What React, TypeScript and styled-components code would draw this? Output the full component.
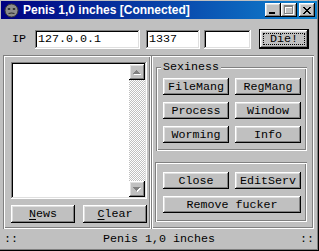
import React from 'react';
import styled, { createGlobalStyle } from 'styled-components';

const Global = createGlobalStyle`
  html, body { margin: 0; padding: 0; background: #c0c0c0; }
  body { width: 319px; height: 251px; overflow: hidden; }
  * { box-sizing: border-box; }
`;

const mono = `"Liberation Mono", "DejaVu Sans Mono", monospace`;

const raised = `box-shadow: inset -1px -1px #000, inset 1px 1px #fff, inset -2px -2px #808080, inset 2px 2px #dfdfdf;`;
const sunken = `box-shadow: inset -1px -1px #fff, inset 1px 1px #808080, inset -2px -2px #dfdfdf, inset 2px 2px #000;`;
const etched = `box-shadow: inset 1px 1px #808080, inset -1px -1px #fff, inset 2px 2px #fff, inset -2px -2px #808080;`;

const Window = styled.div`
  width: 319px;
  height: 251px;
  background: #c0c0c0;
  padding: 1px 2px 3px 1px;
  display: flex;
  flex-direction: column;
  box-shadow: inset -1px -1px #000, inset -2px -2px #808080;
  font-family: ${mono};
  font-size: 11.67px;
  color: #000;
`;

const TitleBar = styled.div`
  height: 18px;
  display: flex;
  align-items: center;
  padding-left: 3px;
  background: linear-gradient(90deg, #000080, #1084d0);
`;

const TitleText = styled.span`
  margin-left: 4px;
  font-family: Arial, "Liberation Sans", Helvetica, sans-serif;
  font-weight: 700;
  font-size: 12px;
  color: #fff;
  white-space: nowrap;
`;

const CaptionGroup = styled.div`
  margin-left: auto;
  margin-right: 2px;
  display: flex;
  align-items: center;
`;

const CaptionBtn = styled.div<{ $gap?: number }>`
  width: 16px;
  height: 14px;
  margin-left: ${p => p.$gap ?? 0}px;
  background: #c0c0c0;
  ${raised}
  display: flex;
  align-items: center;
  justify-content: center;
`;

const IPRow = styled.div`
  margin-top: 10px;
  height: 20px;
  display: flex;
  align-items: center;
  padding-left: 11px;
`;

const Label = styled.span`
  width: 14px;
  white-space: nowrap;
`;

const Field = styled.div<{ $w: number; $ml: number }>`
  width: ${p => p.$w}px;
  margin-left: ${p => p.$ml}px;
  height: 19px;
  background: #fff;
  ${sunken}
  padding: 0 3px;
  display: flex;
  align-items: center;
  white-space: nowrap;
`;

const DefaultBtn = styled.div`
  width: 50px;
  height: 20px;
  margin-left: 8px;
  background: #c0c0c0;
  box-shadow: inset 0 0 0 1px #000, inset -2px -2px #000, inset 2px 2px #fff, inset -3px -3px #808080, inset 3px 3px #dfdfdf;
  display: flex;
  align-items: center;
  justify-content: center;
`;

const Focus = styled.span`
  width: 42px;
  height: 12px;
  outline: 1px dotted #000;
  outline-offset: -1px;
  display: flex;
  align-items: center;
  justify-content: center;
`;

const Main = styled.div`
  margin-top: 6px;
  height: 174px;
  display: flex;
  padding-left: 2px;
`;

const LeftPanel = styled.div`
  width: 148px;
  ${etched}
  padding: 7px 0 0 8px;
  display: flex;
  flex-direction: column;
`;

const ListBox = styled.div`
  width: 136px;
  height: 137px;
  background: #fff;
  ${sunken}
  padding: 2px;
  display: flex;
  justify-content: flex-end;
`;

const ScrollBar = styled.div`
  width: 16px;
  display: flex;
  flex-direction: column;
  background: repeating-conic-gradient(#fff 0 25%, #c0c0c0 0 50%) 0 0 / 2px 2px;
`;

const ScrollBtn = styled.div`
  width: 16px;
  height: 16px;
  background: #c0c0c0;
  ${raised}
  display: flex;
  align-items: center;
  justify-content: center;
`;

const Track = styled.div`
  flex: 1;
`;

const ButtonRow = styled.div<{ $gap: number; $mt: number }>`
  display: flex;
  gap: ${p => p.$gap}px;
  margin-top: ${p => p.$mt}px;
`;

const Btn = styled.div<{ $w: number; $h?: number }>`
  width: ${p => p.$w}px;
  height: ${p => p.$h ?? 17}px;
  background: #c0c0c0;
  ${raised}
  display: flex;
  align-items: center;
  justify-content: center;
  white-space: pre;
`;

const U = styled.span`
  text-decoration: underline;
  text-underline-offset: 2px;
`;

const RightPanel = styled.div`
  width: 163px;
  ${etched}
  padding: 7px 0 0 4px;
  display: flex;
  flex-direction: column;
`;

const Group = styled.div`
  position: relative;
  margin-top: 5px;
  margin-left: 1px;
  width: 151px;
  height: 84px;
  ${etched}
  padding: 11px 0 0 7px;
  display: flex;
  flex-direction: column;
  gap: 7px;
`;

const Legend = styled.span`
  position: absolute;
  top: -6px;
  left: 5px;
  padding: 0 2px;
  background: #c0c0c0;
  line-height: 12px;
`;

const Frame = styled.div`
  margin-top: 11px;
  width: 152px;
  height: 60px;
  ${etched}
  padding: 10px 0 0 8px;
  display: flex;
  flex-direction: column;
  gap: 7px;
`;

const GridRow = styled.div`
  display: flex;
  gap: 6px;
`;

const StatusBar = styled.div`
  flex: 1;
  display: flex;
  align-items: center;
  padding: 1px 3px 0 3px;
  justify-content: space-between;
`;

const FaceIcon = () => (
  <svg width="15" height="15" viewBox="0 0 15 15">
    <circle cx="7.5" cy="7.5" r="6.5" fill="#8c8c8c" stroke="#3a3a3a" strokeWidth="1" />
    <ellipse cx="5" cy="6" rx="1.4" ry="1" fill="#2a2a2a" />
    <ellipse cx="10" cy="6" rx="1.4" ry="1" fill="#2a2a2a" />
    <path d="M4.5 10.5 Q7.5 9.5 10.5 10.5" stroke="#2a2a2a" strokeWidth="1.2" fill="none" />
  </svg>
);

const MinGlyph = () => (
  <svg width="8" height="7" viewBox="0 0 8 7" shapeRendering="crispEdges">
    <rect x="0" y="5" width="6" height="2" fill="#000" />
  </svg>
);

const MaxGlyph = () => (
  <svg width="10" height="10" viewBox="0 0 10 10" shapeRendering="crispEdges">
    <g fill="#fff" transform="translate(1,1)">
      <rect x="0" y="0" width="9" height="2" />
      <rect x="0" y="0" width="1" height="9" />
      <rect x="8" y="0" width="1" height="9" />
      <rect x="0" y="8" width="9" height="1" />
    </g>
    <g fill="#808080">
      <rect x="0" y="0" width="9" height="2" />
      <rect x="0" y="0" width="1" height="9" />
      <rect x="8" y="0" width="1" height="9" />
      <rect x="0" y="8" width="9" height="1" />
    </g>
  </svg>
);

const CloseGlyph = () => (
  <svg width="8" height="7" viewBox="0 0 8 7" shapeRendering="crispEdges" fill="#000">
    <rect x="0" y="0" width="2" height="1" /><rect x="6" y="0" width="2" height="1" />
    <rect x="1" y="1" width="2" height="1" /><rect x="5" y="1" width="2" height="1" />
    <rect x="2" y="2" width="4" height="1" />
    <rect x="3" y="3" width="2" height="1" />
    <rect x="2" y="4" width="4" height="1" />
    <rect x="1" y="5" width="2" height="1" /><rect x="5" y="5" width="2" height="1" />
    <rect x="0" y="6" width="2" height="1" /><rect x="6" y="6" width="2" height="1" />
  </svg>
);

const Arrow = ({ down }: { down?: boolean }) => {
  const rows = [1, 3, 5, 7];
  const r = down ? [...rows].reverse() : rows;
  return (
    <svg width="8" height="5" viewBox="0 0 8 5" shapeRendering="crispEdges">
      {r.map((w, i) => (
        <rect key={'s' + i} x={(7 - w) / 2 + 1} y={i + 1} width={w} height="1" fill="#fff" />
      ))}
      {r.map((w, i) => (
        <rect key={'g' + i} x={(7 - w) / 2} y={i} width={w} height="1" fill="#808080" />
      ))}
    </svg>
  );
};

export default function App() {
  return (
    <>
      <Global />
      <Window>
        <TitleBar>
          <FaceIcon />
          <TitleText>Penis 1,0 inches [Connected]</TitleText>
          <CaptionGroup>
            <CaptionBtn><MinGlyph /></CaptionBtn>
            <CaptionBtn><MaxGlyph /></CaptionBtn>
            <CaptionBtn $gap={2}><CloseGlyph /></CaptionBtn>
          </CaptionGroup>
        </TitleBar>
        <IPRow>
          <Label>IP</Label>
          <Field $w={105} $ml={9}>127.0.0.1</Field>
          <Field $w={54} $ml={6}>1337</Field>
          <Field $w={47} $ml={4}></Field>
          <DefaultBtn><Focus>Die!</Focus></DefaultBtn>
        </IPRow>
        <Main>
          <LeftPanel>
            <ListBox>
              <ScrollBar>
                <ScrollBtn><Arrow /></ScrollBtn>
                <Track />
                <ScrollBtn><Arrow down /></ScrollBtn>
              </ScrollBar>
            </ListBox>
            <ButtonRow $gap={8} $mt={6}>
              <Btn $w={64} $h={18}><U>N</U>ews</Btn>
              <Btn $w={64} $h={18}><U>C</U>lear</Btn>
            </ButtonRow>
          </LeftPanel>
          <RightPanel>
            <Group>
              <Legend>Sexiness</Legend>
              <GridRow>
                <Btn $w={66}>FileMang</Btn>
                <Btn $w={66}>RegMang</Btn>
              </GridRow>
              <GridRow>
                <Btn $w={66}>Process</Btn>
                <Btn $w={66}>Window</Btn>
              </GridRow>
              <GridRow>
                <Btn $w={66}>Worming</Btn>
                <Btn $w={66}>Info</Btn>
              </GridRow>
            </Group>
            <Frame>
              <GridRow>
                <Btn $w={66}>Close</Btn>
                <Btn $w={66}>EditServ</Btn>
              </GridRow>
              <Btn $w={138}>Remove fucker</Btn>
            </Frame>
          </RightPanel>
        </Main>
        <StatusBar>
          <span>::</span>
          <span>Penis 1,0 inches</span>
          <span>::</span>
        </StatusBar>
      </Window>
    </>
  );
}
